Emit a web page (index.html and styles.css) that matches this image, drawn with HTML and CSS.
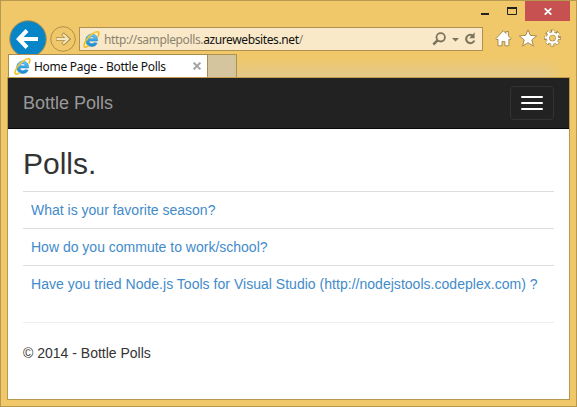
FILE: index.html
```html
<!DOCTYPE html>
<html lang="en">
<head>
<meta charset="utf-8">
<title>Home Page - Bottle Polls</title>
<link rel="stylesheet" href="styles.css">
</head>
<body>
<svg class="defs" width="0" height="0" aria-hidden="true">
  <defs>
    <linearGradient id="blue" x1="0" y1="0" x2="0" y2="1"><stop offset="0" stop-color="#66c8f4"/><stop offset="1" stop-color="#1787cf"/></linearGradient>
    <symbol id="ie" viewBox="0 0 16 16">
      <path d="M13.700 9.400H5.600C5.800 11 6.900 11.900 8.400 11.900c1.100 0 1.800-.4 2.300-1.100l2.600.7C12.300 13.700 10.500 14.600 8.300 14.600 5 14.600 2.600 12.300 2.600 8.800 2.600 5.400 5 3 8.300 3c3.500 0 5.700 2.400 5.400 6.400zM5.700 7.400h4.900C10.400 6.100 9.500 5.400 8.200 5.400 6.800 5.400 5.900 6.100 5.700 7.400z" fill="url(#blue)" stroke="#1884ca" stroke-width=".5"/>
      <path d="M13.900 5.200C15.300 2.600 15.400.8 13.800.7 11 .5 5.700 4.300 3.300 8.200 1.100 11.600.4 14.500 1.600 15.100c.9.400 2.300-.3 3.800-1.400" fill="none" stroke="#f3bd17" stroke-width="1.400"/>
      <path d="M14 1C11.500.6 6.300 4.500 3.800 8.200" fill="none" stroke="#ffe36c" stroke-width=".5"/>
    </symbol>
  </defs>
</svg>
<div class="window">
  <div class="titlebar">
    <svg class="minmax" viewBox="0 0 50 21" aria-hidden="true"><path d="M6 12h8v2H6z" fill="#222"/><path d="M32.500 7v6.500h9V7" fill="none" stroke="#222"/><path d="M32 6h10v2h-10z" fill="#222"/></svg>
    <div class="close"><svg viewBox="0 0 8 7" aria-hidden="true"><path d="M.7.3l6.600 6.400M7.300.3L.7 6.700" stroke="#fff" stroke-width="1.700"/></svg></div>
  </div>
  <div class="toolbar">
    <svg class="back" viewBox="0 0 38 38" aria-hidden="true"><circle cx="19" cy="19" r="18.200" fill="#0885c6" stroke="#a18a50"/><path d="M9.500 19H29M18 10.500L9.800 19l8.200 8.500" fill="none" stroke="#fff" stroke-width="4"/></svg>
    <svg class="forward" viewBox="0 0 26 26" aria-hidden="true"><circle cx="13" cy="13" r="12.300" fill="none" stroke="#ad8f4b"/><path d="M6 13h12M12.500 7.500L18.500 13l-6 5.500" fill="none" stroke="#a98d4f" stroke-width="3.600"/><path d="M6.500 13h11.500M13 8.200l5 4.800-5 4.800" fill="none" stroke="#f8e6bf" stroke-width="2"/></svg>
    <div class="address">
      <svg class="ie" aria-hidden="true"><use href="#ie"/></svg>
      <span class="url">http://samplepolls.<b>azurewebsites.net</b>/</span>
      <svg class="tools" viewBox="0 0 50 22" aria-hidden="true"><g fill="none" stroke="#7c735b"><circle cx="11.700" cy="9.300" r="4.200" stroke-width="1.800"/><path d="M8.500 12.300L4.300 16.500" stroke-width="2.500"/><path d="M43.500 7.300A4.200 4.200 0 1 0 45.300 12.500" stroke-width="2"/></g><path d="M23 10h7l-3.500 3.600zM45.600 4.300v5.900h-5.400z" fill="#7c735b"/></svg>
    </div>
    <svg class="actions" viewBox="0 0 66 20" aria-hidden="true">
      <g fill="#fff" stroke="#9d8248" stroke-width=".9">
      <path d="M.8 10.800L8.300 2.700l2.700 2.700V3.500h2.400v4.400l2.700 2.900-1.200 1.200-1-.9v6.700H9.900v-4.200H7v4.200H3v-6.700l-1 .9z"/>
      <path d="M33 1.800l2.400 5.600 6.200.5-4.800 4 1.600 6.100-5.400-3.300-5.400 3.300 1.600-6.100-4.800-4 6.200-.5z"/>
      </g>
      <g fill="none"><circle cx="57.500" cy="10" r="6.800" stroke="#9d8248" stroke-width="3.300" stroke-dasharray="3.500 1.841" stroke-dashoffset="1.750"/><circle cx="57.500" cy="10" r="4.600" stroke="#9d8248" stroke-width="3.800"/><circle cx="57.500" cy="10" r="6.500" stroke="#fff" stroke-width="2.700" stroke-dasharray="2.300 2.805" stroke-dashoffset="1.150"/><circle cx="57.500" cy="10" r="4.600" stroke="#fff" stroke-width="2.500"/></g>
    </svg>
  </div>
  <div class="tabs">
    <div class="tab">
      <svg class="ie" aria-hidden="true"><use href="#ie"/></svg>
      <span class="tab-title">Home Page - Bottle Polls</span>
      <svg class="tab-close" viewBox="0 0 8 8" aria-hidden="true"><path d="M.6.600l6.800 6.800M7.400.600L.6 7.400" stroke="#a6a6a6" stroke-width="2"/></svg>
    </div>
    <div class="new-tab"></div>
    <div class="tab-space"></div>
  </div>
  <div class="page">
    <nav class="navbar">
      <span class="brand">Bottle Polls</span>
      <div class="toggle"><i></i><i></i><i></i></div>
    </nav>
    <main class="content">
      <h1>Polls.</h1>
      <ul class="polls">
        <li><a>What is your favorite season?</a></li>
        <li><a>How do you commute to work/school?</a></li>
        <li><a class="long">Have you tried Node.js Tools for Visual Studio (http://nodejstools.codeplex.com) ?</a></li>
      </ul>
      <footer>© 2014 - Bottle Polls</footer>
    </main>
  </div>
</div>
</body>
</html>
```
FILE: styles.css
```css
* { box-sizing: border-box; }
body { margin: 0; overflow: hidden; font: 14px/20px "Liberation Sans", Arial, sans-serif; color: #333; }
svg { display: block; flex: none; }
.defs { position: absolute; }
.window { width: 577px; height: 407px; display: flex; flex-direction: column; background: #f0c869; border: 1px solid #b6984f; padding: 0 6px 6px; }
.titlebar { height: 20px; display: flex; justify-content: flex-end; }
.minmax { width: 50px; height: 21px; }
.close { width: 45px; height: 20px; background: #c75050; display: flex; align-items: center; justify-content: center; padding-top: 1px; }
.close svg { width: 8px; height: 7px; }
.toolbar { height: 33px; display: flex; align-items: flex-start; padding-left: 2px; }
.back { width: 38px; height: 38px; margin-top: -1px; }
.forward { width: 26px; height: 26px; margin: 5px 3px 0; }
.address { width: 404px; height: 24px; margin-top: 6px; display: flex; align-items: center; border: 1px solid #ae9250; background: #f9e9c8; padding: 0 3px; }
.ie { width: 17px; height: 17px; }
.url, .tab-title { font: 12px/20px "Noto Sans", "Open Sans", sans-serif; white-space: nowrap; }
.url { color: #8c826f; margin-left: 4px; flex: 1; letter-spacing: -.38px; padding-top: 1px; }
.url b { font-weight: 400; color: #111; }
.tools { width: 50px; height: 22px; }
.actions { width: 66px; height: 20px; margin: 7px 0 0 12px; }
.tabs { position: relative; height: 23px; display: flex; padding-left: 1px; }
.tab { width: 200px; display: flex; align-items: center; background: #fff; border: 1px solid #a98d4c; border-bottom: 0; padding: 0 6px 0 5px; }
.tab-title { color: #111; margin-left: 3px; flex: 1; letter-spacing: -.29px; padding-top: 1px; }
.tab-close { width: 8px; height: 8px; }
.new-tab { width: 29px; background: #d5c59f; border: 1px solid #ae9250; border-left: 0; border-bottom: 0; }
.tab-space { flex: 1; background: linear-gradient(to right, #f0c86900 92%, #f0c869 98%), linear-gradient(#f0c869 15%, #e2c88a); }
.page { flex: 1; background: #fff; border: 1px solid #b6984f; border-top-color: #c49c4c; }
.navbar { height: 51px; display: flex; justify-content: space-between; padding: 8px 15px; background: #222; border-bottom: 1px solid #080808; }
.brand { font-size: 18px; line-height: 34px; color: #999; }
.toggle { width: 44px; height: 34px; border: 1px solid #333; border-radius: 4px; padding: 9px 10px; display: grid; gap: 4px; align-content: start; }
.toggle i { height: 2px; background: #fff; border-radius: 1px; }
.content { padding: 0 15px; }
h1 { font-size: 30px; line-height: 33px; font-weight: 500; margin: 0; padding: 18px 0 11px; }
.polls { list-style: none; margin: 0; padding: 0; }
.polls li { height: 37px; padding: 8px; border-top: 1px solid #ddd; white-space: nowrap; }
.polls a { color: #428bca; }
.polls .long { letter-spacing: .025px; }
footer { margin-top: 20px; padding-top: 20px; border-top: 1px solid #eee; }
```
